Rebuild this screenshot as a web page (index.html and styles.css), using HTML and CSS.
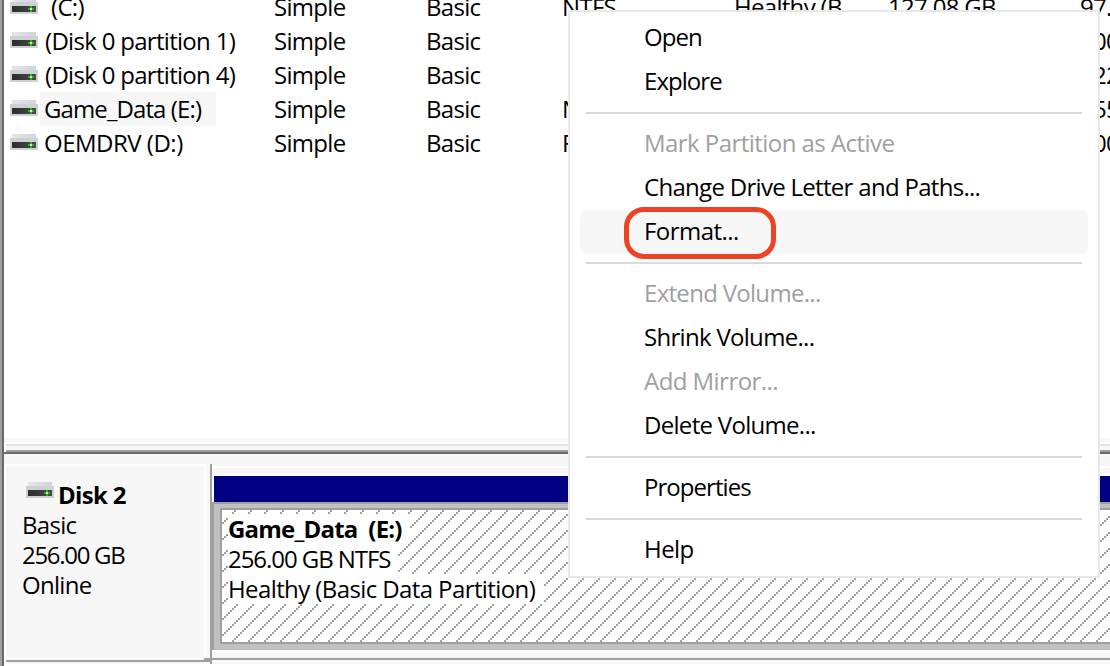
FILE: index.html
```html
<!DOCTYPE html>
<html lang="en">
<head>
<meta charset="utf-8">
<title>Disk Management</title>
<link rel="stylesheet" href="styles.css">
</head>
<body>
<svg class="defs" width="0" height="0" aria-hidden="true">
  <defs>
    <linearGradient id="lid" x1="0" x2="1" y1="0" y2="0"><stop offset="0" stop-color="#e2e5e9"/><stop offset="1" stop-color="#d2d5d8"/></linearGradient>
    <linearGradient id="slot" x1="0" x2="1" y1="0" y2="0"><stop offset="0" stop-color="#2c2e2d"/><stop offset="1" stop-color="#484b46"/></linearGradient>
    <symbol id="drive" viewBox="0 0 28 16">
      <path d="M2 0H26V4H2Z" fill="url(#lid)"/>
      <path d="M0 4H28V16H0Z" fill="#cdd1d4"/>
      <path d="M2 8H26V14H2Z" fill="url(#slot)"/>
      <path d="M18 10H24V12H18ZM20 8H22V14H20Z" fill="#35a52c"/>
      <path d="M20 10H22V12H20Z" fill="#a4ff8c"/>
    </symbol>
    <pattern id="hatch" width="16" height="16" patternUnits="userSpaceOnUse">
      <path d="M12 0h2v2h-2zM10 2h2v2h-2zM8 4h2v2h-2zM6 6h2v2h-2zM4 8h2v2h-2zM2 10h2v2h-2zM0 12h2v2h-2zM14 14h2v2h-2z" fill="#a0a0a0" shape-rendering="crispEdges"/>
    </pattern>
  </defs>
</svg>
<div class="window">
  <div class="volumes">
    <div class="row"><svg class="drive"><use href="#drive"/></svg><span class="name indent">(C:)</span><span>Simple</span><span>Basic</span><span>NTFS</span><span>Healthy (B...</span><span>127.08 GB</span><span>97.</span></div>
    <div class="row"><svg class="drive"><use href="#drive"/></svg><span class="name">(Disk 0 partition 1)</span><span>Simple</span><span>Basic</span><span></span><span></span><span></span><span>100</span></div>
    <div class="row"><svg class="drive"><use href="#drive"/></svg><span class="name">(Disk 0 partition 4)</span><span>Simple</span><span>Basic</span><span></span><span></span><span></span><span>522</span></div>
    <div class="row"><svg class="drive"><use href="#drive"/></svg><span class="name selected">Game_Data (E:)</span><span>Simple</span><span>Basic</span><span>NTFS</span><span></span><span></span><span>255</span></div>
    <div class="row"><svg class="drive"><use href="#drive"/></svg><span class="name oem">OEMDRV (D:)</span><span>Simple</span><span>Basic</span><span>FAT32</span><span></span><span></span><span>100</span></div>
  </div>
  <div class="splitter"></div>
  <div class="disk">
    <div class="disk-label">
      <div class="disk-title"><svg class="drive"><use href="#drive"/></svg><b>Disk 2</b></div>
      <div>Basic</div><div class="tighter">256.00 GB</div><div>Online</div>
    </div>
    <div class="disk-map">
      <div class="bar"></div>
      <div class="frame">
        <div class="partition">
          <svg class="hatching"><rect width="100%" height="100%" fill="url(#hatch)"/></svg>
          <div class="line title">Game_Data&nbsp; (E:)</div>
          <div class="line size">256.00 GB NTFS</div>
          <div class="line status">Healthy (Basic Data Partition)</div>
        </div>
      </div>
      <div class="map-foot"></div>
    </div>
  </div>
  <div class="menu">
    <div class="item tight">Open</div>
    <div class="item tight">Explore</div>
    <div class="sep"></div>
    <div class="item off loose">Mark Partition as Active</div>
    <div class="item">Change Drive Letter and Paths...</div>
    <div class="item hot loose">Format...<i class="ring"></i></div>
    <div class="sep"></div>
    <div class="item off">Extend Volume...</div>
    <div class="item">Shrink Volume...</div>
    <div class="item off loose">Add Mirror...</div>
    <div class="item">Delete Volume...</div>
    <div class="sep"></div>
    <div class="item tight">Properties</div>
    <div class="sep"></div>
    <div class="item loose">Help</div>
  </div>
</div>
</body>
</html>
```

FILE: styles.css
```css
* { box-sizing: border-box; }
body {
  margin: 0;
  background: #fff;
  color: #000;
  font: 24px/34px "Open Sans", "Noto Sans", sans-serif;
  letter-spacing: -0.7px;
}
.loose { letter-spacing: -0.55px; }
.tight { letter-spacing: -0.95px; }
.tighter { letter-spacing: -1.3px; }
.defs { position: absolute; }
.window {
  position: relative;
  display: flex;
  flex-direction: column;
  width: 1110px;
  height: 666px;
  overflow: hidden;
  border-left: 2px solid #a0a0a0;
  box-shadow: inset 2px 0 #696969;
  padding-left: 2px;
}
.drive { display: block; flex: none; width: 28px; height: 16px; }

.volumes { height: 438px; flex: none; margin-top: -10px; padding-left: 6px; }
.row {
  display: grid;
  grid-template-columns: 30px 234px 152px 136px 172px 154px 192px 60px;
  height: 34px;
  white-space: pre;
}
.row .drive { margin-top: 8px; }
.name { justify-self: start; padding: 0 12px 0 5px; }
.indent { padding-left: 11px; }
.selected { background: #f7f7f7; width: 176px; padding-left: 4px; letter-spacing: -0.9px; }
.oem { padding-left: 4px; letter-spacing: -0.5px; }

.splitter {
  flex: none;
  height: 26px;
  margin-top: 10px;
  background:
    linear-gradient(#fff, #fff) 0 6px / 2px 8px no-repeat,
    linear-gradient(#f7f7f7 0 4px, #fff 4px 6px, #e3e3e3 6px 8px, #f7f7f7 8px 12px, #a0a0a0 12px 14px, #696969 14px 16px, #f7f7f7 16px);
}

.disk {
  flex: none;
  display: grid;
  grid-template-columns: 206px 1fr;
  height: 200px;
  line-height: 30px;
}
.disk-label {
  background: linear-gradient(#f7f7f7 0 194px, #a0a0a0 194px 196px, #f7f7f7 196px);
  border: solid #fff;
  border-width: 2px 2px 0;
  margin-right: 4px;
  padding: 14px 0 0 16px;
  box-shadow: 4px 0 #f7f7f7;
}
.disk-title { display: flex; gap: 4px; padding-left: 4px; }
.disk-title .drive { margin-top: 2px; }
.disk-map {
  border-left: 2px solid #a0a0a0;
  display: flex;
  flex-direction: column;
  background: linear-gradient(#f7f7f7 0 2px, #fff 2px 4px, #f7f7f7 4px 10px, #fff 10px);
  box-shadow: none;
}
.bar { height: 26px; margin: 12px 0 0 2px; background: #000080; }
.frame {
  height: 148px;
  border: solid #a0a0a0;
  border-width: 2px 0 0 2px;
  background: #c0c0bf;
  padding: 4px 0 6px 6px;
}
.partition {
  position: relative;
  height: 136px;
  border: 2px solid #a0a0a0;
  border-right: 0;
  background: #fff;
  padding: 4px 0 0 6px;
}
.hatching { position: absolute; left: 0; top: 0; width: 100%; height: 100%; }
.line { position: relative; height: 30px; background: #fff; white-space: nowrap; }
.title { width: 182px; font-weight: 700; letter-spacing: -0.8px; }
.size { width: 170px; letter-spacing: -1.05px; }
.status { width: 316px; letter-spacing: -0.6px; }
.map-foot {
  height: 14px;
  background: linear-gradient(#fff 0 2px, #f7f7f7 2px 8px, #a0a0a0 8px 10px, #f7f7f7 10px);
  box-shadow: none;
}
.disk-map::after {
  content: "";
  width: 6px;
  height: 4px;
  margin: -6px 0 0 -8px;
  background: #a0a0a0;
}

.menu {
  position: absolute;
  left: 566px;
  top: 10px;
  width: 532px;
  height: 568px;
  padding: 4px 10px;
  background: #fff;
  border: 2px solid #e8e8e8;
}
.item { position: relative; height: 44px; line-height: 42px; padding-left: 64px; white-space: nowrap; }
.sep { height: 2px; margin: 8px 6px; background: #d9d9d9; }
.off { color: #a0a0a0; }
.hot { background: #f7f7f7; border-radius: 7px; }
.ring {
  position: absolute;
  left: 44px;
  top: -3px;
  width: 152px;
  height: 52px;
  border: 5px solid #ed4224;
  border-radius: 20px;
}
```
